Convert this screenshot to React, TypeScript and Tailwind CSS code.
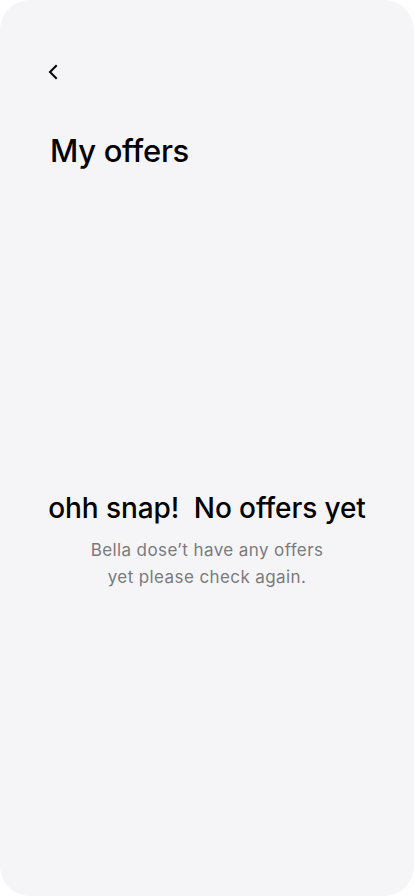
const App = () => {
  return (
    <div className="min-h-screen w-full bg-white">
      <div
        className="flex h-[896px] w-[414px] flex-col rounded-[30px] bg-[#f5f5f7] text-black"
        style={{ fontFamily: "Inter, 'Noto Sans', sans-serif" }}
      >
        <div className="px-[48px] pt-[63px]">
          <button className="flex h-[18px] w-[14px] items-center justify-start">
            <svg width="10" height="16" viewBox="0 0 10 16" fill="none">
              <path d="M8 2L2 8l6 6" stroke="#000" strokeWidth="2" strokeLinecap="square" />
            </svg>
          </button>
        </div>
        <h1 className="mt-[50px] pl-[50px] text-[31px] font-medium leading-[40px] tracking-[-0.3px]">My offers</h1>
        <div className="mt-[320px] flex flex-col items-center">
          <h2 className="text-[28px] font-medium leading-[34px] tracking-[-0.1px] whitespace-pre">ohh snap!  No offers yet</h2>
          <p className="mt-[12px] text-center text-[17px] leading-[27px] tracking-[0.4px] text-[#7a7a7d]">
            Bella dose’t have any offers
            <br />
            yet please check again.
          </p>
        </div>
      </div>
    </div>
  );
};

export default App;
